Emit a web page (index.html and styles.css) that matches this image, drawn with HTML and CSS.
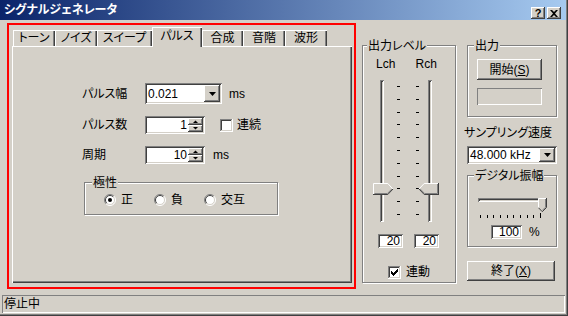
FILE: index.html
```html
<!DOCTYPE html>
<html lang="ja">
<head>
    <meta charset="UTF-8">
    <title>シグナルジェネレータ</title>
    <link rel="stylesheet" href="styles.css">
</head>
<body>
<div class="window">
    <div class="titlebar">
        <span class="title">シグナルジェネレータ</span>
        <span class="cap-btn btn">?</span>
        <span class="cap-btn btn"><svg width="8" height="7" viewBox="0 0 8 7"><path d="M0 0h2l2 2 2-2h2L5 3.5 8 7H6L4 5 2 7H0l3-3.5z"/></svg></span>
    </div>
    <div class="client">
        <div class="red-frame">
            <ul class="tabs">
                <li class="tab">トーン</li>
                <li class="tab">ノイズ</li>
                <li class="tab tab-wide">スイープ</li>
                <li class="tab active">パルス</li>
                <li class="tab tab-narrow">合成</li>
                <li class="tab">音階</li>
                <li class="tab">波形</li>
            </ul>
            <div class="panel">
                <div class="row">
                    <span class="row-label">パルス幅</span>
                    <div class="combo combo-pulse sunken">
                        <span class="combo-val">0.021</span>
                        <span class="drop-btn btn"><svg width="7" height="4" viewBox="0 0 7 4"><path d="M0 0h7L3.5 4z"/></svg></span>
                    </div>
                    <span class="unit">ms</span>
                </div>
                <div class="row row-spin">
                    <span class="row-label">パルス数</span>
                    <div class="spin sunken">
                        <span class="spin-val">1</span>
                        <span class="spin-btns">
                            <span class="spin-btn btn"><svg width="5" height="3" viewBox="0 0 5 3"><path d="M0 3h5L2.5 0.5z"/></svg></span>
                            <span class="spin-btn btn"><svg width="5" height="3" viewBox="0 0 5 3"><path d="M0 0h5L2.5 2.5z"/></svg></span>
                        </span>
                    </div>
                    <span class="check check-cont">
                        <svg width="13" height="13" viewBox="0 0 13 13"><path d="M0 0h12v1H1v11H0z" fill="#808080"/><path d="M1 1h10v1H2v10H1z" fill="#404040"/><path d="M12 0h1v13H0v-1h12z" fill="#fff"/><path d="M11 1h1v11H1v-1h10z" fill="#d4d0c8"/><path d="M2 2h9v9H2z" fill="#fff"/></svg>
                        連続
                    </span>
                </div>
                <div class="row row-spin">
                    <span class="row-label">周期</span>
                    <div class="spin sunken">
                        <span class="spin-val">10</span>
                        <span class="spin-btns">
                            <span class="spin-btn btn"><svg width="5" height="3" viewBox="0 0 5 3"><path d="M0 3h5L2.5 0.5z"/></svg></span>
                            <span class="spin-btn btn"><svg width="5" height="3" viewBox="0 0 5 3"><path d="M0 0h5L2.5 2.5z"/></svg></span>
                        </span>
                    </div>
                    <span class="unit unit-wide">ms</span>
                </div>
                <div class="group polarity">
                    <span class="legend">極性</span>
                    <div class="radios">
                        <span class="radio">
                            <svg width="12" height="12" viewBox="0 0 12 12"><circle cx="6" cy="6" r="5" fill="#fff"/><path d="M2.1 9.9A5.5 5.5 0 0 1 9.9 2.1" stroke="#808080" fill="none"/><path d="M2.8 9.2A4.5 4.5 0 0 1 9.2 2.8" stroke="#404040" fill="none"/><path d="M9.9 2.1A5.5 5.5 0 0 1 2.1 9.9" stroke="#fff" fill="none"/><path d="M9.2 2.8A4.5 4.5 0 0 1 2.8 9.2" stroke="#d4d0c8" fill="none"/><circle cx="6" cy="6" r="2"/></svg>
                            正
                        </span>
                        <span class="radio">
                            <svg width="12" height="12" viewBox="0 0 12 12"><circle cx="6" cy="6" r="5" fill="#fff"/><path d="M2.1 9.9A5.5 5.5 0 0 1 9.9 2.1" stroke="#808080" fill="none"/><path d="M2.8 9.2A4.5 4.5 0 0 1 9.2 2.8" stroke="#404040" fill="none"/><path d="M9.9 2.1A5.5 5.5 0 0 1 2.1 9.9" stroke="#fff" fill="none"/><path d="M9.2 2.8A4.5 4.5 0 0 1 2.8 9.2" stroke="#d4d0c8" fill="none"/></svg>
                            負
                        </span>
                        <span class="radio">
                            <svg width="12" height="12" viewBox="0 0 12 12"><circle cx="6" cy="6" r="5" fill="#fff"/><path d="M2.1 9.9A5.5 5.5 0 0 1 9.9 2.1" stroke="#808080" fill="none"/><path d="M2.8 9.2A4.5 4.5 0 0 1 9.2 2.8" stroke="#404040" fill="none"/><path d="M9.9 2.1A5.5 5.5 0 0 1 2.1 9.9" stroke="#fff" fill="none"/><path d="M9.2 2.8A4.5 4.5 0 0 1 2.8 9.2" stroke="#d4d0c8" fill="none"/></svg>
                            交互
                        </span>
                    </div>
                </div>
            </div>
        </div>

        <div class="group level">
            <span class="legend">出力レベル</span>
            <div class="ch-row">
                <span class="ch">Lch</span>
                <span class="ch">Rch</span>
            </div>
            <div class="sliders">
                <div class="vslider vslider-l">
                    <span class="vtrack"></span>
                    <svg class="thumb" width="21" height="12" viewBox="0 0 21 12"><path d="M0 0h15l5.5 6-5.5 6H0z" fill="#d4d0c8"/><path d="M0.5 11V0.5h14.3l5 5.5" stroke="#fff" fill="none"/><path d="M20 6l-5.2 5.5H0" stroke="#404040" fill="none"/><path d="M18.8 6l-4.4 4.5H1.5" stroke="#808080" fill="none"/></svg>
                </div>
                <div class="ticks"><i></i><i></i><i></i><i></i><i></i><i></i><i></i><i></i><i></i><i></i><i></i></div>
                <div class="ticks"><i></i><i></i><i></i><i></i><i></i><i></i><i></i><i></i><i></i><i></i><i></i></div>
                <div class="vslider vslider-r">
                    <span class="vtrack"></span>
                    <svg class="thumb" width="21" height="12" viewBox="0 0 21 12"><path d="M21 0H6L0.5 6 6 12h15z" fill="#d4d0c8"/><path d="M1 6l5.2-5.5H20" stroke="#fff" fill="none"/><path d="M1 6l5.2 5.5H21M20.5 0v12" stroke="#404040" fill="none"/><path d="M2.2 6l4.4 4.5H19.5V1" stroke="#808080" fill="none"/></svg>
                </div>
            </div>
            <div class="level-edits">
                <span class="edit sunken">20</span>
                <span class="edit sunken">20</span>
            </div>
            <span class="check check-link">
                <svg width="13" height="13" viewBox="0 0 13 13"><path d="M0 0h12v1H1v11H0z" fill="#808080"/><path d="M1 1h10v1H2v10H1z" fill="#404040"/><path d="M12 0h1v13H0v-1h12z" fill="#fff"/><path d="M11 1h1v11H1v-1h10z" fill="#d4d0c8"/><path d="M2 2h9v9H2z" fill="#fff"/><path d="M3 5h1v3H3zM4 6h1v3H4zM5 7h1v3H5zM6 6h1v3H6zM7 5h1v3H7zM8 4h1v3H8zM9 3h1v3H9z"/></svg>
                連動
            </span>
        </div>

        <div class="side">
            <div class="group output">
                <span class="legend">出力</span>
                <span class="btn push start">開始(<u>S</u>)</span>
                <span class="static-box"></span>
            </div>
            <span class="side-label">サンプリング速度</span>
            <div class="combo combo-rate sunken">
                <span class="combo-val">48.000 kHz</span>
                <span class="drop-btn btn"><svg width="7" height="4" viewBox="0 0 7 4"><path d="M0 0h7L3.5 4z"/></svg></span>
            </div>
            <div class="group digital">
                <span class="legend">デジタル振幅</span>
                <div class="hslider">
                    <span class="htrack"></span>
                    <svg class="hthumb" width="9" height="14" viewBox="0 0 9 14"><path d="M0 0h9v9.5L4.5 14 0 9.5z" fill="#d4d0c8"/><path d="M0.5 9.5V0.5h7.5" stroke="#fff" fill="none"/><path d="M8.5 0v9.5l-4.2 4.2L0.5 9.8" stroke="#404040" fill="none"/><path d="M7.5 1v8.2l-3.2 3.2" stroke="#808080" fill="none"/></svg>
                </div>
                <div class="hticks"><i></i><i></i><i></i><i></i><i></i><i></i><i></i><i></i><i></i><i class="tick-end"></i></div>
                <div class="amp-row">
                    <span class="edit edit-amp sunken">100</span>
                    <span class="unit-pct">%</span>
                </div>
            </div>
            <span class="btn push quit">終了(<u>X</u>)</span>
        </div>
    </div>
    <div class="statusbar">停止中</div>
</div>
</body>
</html>
```

FILE: styles.css
```css
body,div,ul,li,span{margin:0;padding:0;}
ul{list-style-type:none;}
body{background:#d4d0c8;color:#000;font:12px/14px "Liberation Sans","Noto Sans CJK JP",sans-serif;font-feature-settings:"palt";}
svg{display:block;}
i{display:block;}
u{text-decoration:underline;}

/* 3D frames */
.btn{background:#d4d0c8;box-shadow:inset -1px -1px #404040,inset 1px 1px #fff,inset -2px -2px #808080;}
.sunken{background:#fff;box-shadow:inset 1px 1px #808080,inset -1px -1px #fff,inset 2px 2px #404040,inset -2px -2px #d4d0c8;}
.group{position:relative;box-sizing:border-box;border:1px solid #808080;box-shadow:inset 1px 1px #fff,1px 1px #fff;}
.legend{position:absolute;top:-6px;left:6px;padding:0 1px;background:#d4d0c8;line-height:12px;white-space:nowrap;}

.window{width:568px;height:316px;display:flex;flex-direction:column;box-shadow:inset -1px -1px #404040,inset -2px -2px #808080;}

/* title */
.titlebar{height:20px;margin-right:2px;padding:0 5px 0 4px;display:flex;align-items:center;background:linear-gradient(to right,#0a246a,#a6caf0);}
.title{flex:1;color:#fff;font-weight:bold;}
.cap-btn{width:14px;height:12px;margin:6px 0 0 2px;display:flex;align-items:center;justify-content:center;font:bold 11px/12px "Liberation Sans",sans-serif;}

.client{height:275px;box-sizing:border-box;padding:3px 0 0 7px;display:flex;align-items:flex-start;}

/* tab control */
.red-frame{width:349px;height:266px;box-sizing:border-box;border:2px solid #f00;padding:2px 2px 4px 3px;display:flex;flex-direction:column;}
.tabs{height:19px;margin-left:1px;display:flex;align-items:flex-end;position:relative;z-index:1;}
.tab{width:42px;height:16px;box-sizing:border-box;text-align:center;line-height:16px;box-shadow:inset 1px 1px #fff,inset -1px 0 #404040,inset -2px 0 #808080;}
.tab-wide{width:55px;}
.tab-narrow{width:41px;}
.tab.active{width:50px;height:20px;margin-bottom:-1px;line-height:18px;background:#d4d0c8;}
.panel{flex:1;padding:37px 0 0 70px;box-shadow:inset 1px 1px #fff,inset -1px -1px #404040,inset -2px -2px #808080;}

.row{height:21px;display:flex;align-items:center;}
.row-spin{height:18px;margin-top:12px;}
.row-label{width:63px;}
.unit{margin-left:7px;}
.unit-wide{margin-left:8px;}

.combo{display:flex;align-items:center;box-sizing:border-box;padding:2px;}
.combo-pulse{width:77px;height:21px;}
.combo-val{flex:1;padding-left:1px;}
.drop-btn{width:16px;align-self:stretch;display:flex;align-items:center;justify-content:center;}

.spin{width:60px;height:18px;box-sizing:border-box;padding:2px;display:flex;}
.spin-val{flex:1;text-align:right;padding-right:1px;line-height:14px;}
.spin-btns{width:15px;display:flex;flex-direction:column;}
.spin-btn{flex:1;display:flex;align-items:center;justify-content:center;}

.check{display:flex;align-items:center;gap:4px;}
.check-cont{margin-left:15px;}

.polarity{width:194px;height:33px;margin:18px 0 0 2px;padding:11px 0 0 19px;}
.polarity .legend{left:7px;}
.radios{display:flex;gap:21px;}
.radio{display:flex;align-items:center;gap:5px;height:12px;}

/* output level */
.level{width:94px;height:238px;margin:22px 0 0 6px;padding-top:12px;}
.level .legend{left:4px;}
.ch-row{display:flex;margin-left:13px;line-height:12px;}
.ch{width:43px;}
.sliders{height:142px;margin:10px 0 0 10px;display:flex;}
.vslider{width:21px;position:relative;}
.vtrack{display:block;width:4px;height:142px;box-shadow:inset 1px 1px #808080,inset -1px -1px #fff,inset 2px 2px #404040;}
.vslider-l .vtrack{margin-left:7px;}
.vslider-r .vtrack{margin-left:9px;}
.thumb{position:absolute;top:103px;left:0;}
.vslider-r .thumb{left:-1px;}
.ticks{width:3px;margin-left:3px;padding:6px 0 7px;box-sizing:border-box;display:flex;flex-direction:column;justify-content:space-between;}
.ticks + .ticks{margin-left:16px;margin-right:0;}
.ticks i{height:1px;background:#000;}
.level-edits{display:flex;gap:11px;margin:12px 0 0 15px;}
.edit{width:25px;height:14px;box-sizing:border-box;padding-right:3px;text-align:right;line-height:14px;}
.check-link{margin:17px 0 0 25px;gap:5px;}

/* right column */
.side{width:90px;margin:22px 0 0 11px;display:flex;flex-direction:column;align-items:flex-start;}
.output{width:90px;height:72px;padding:13px 0 0 9px;}
.push{display:flex;align-items:center;justify-content:center;}
.start{width:65px;height:21px;}
.static-box{display:block;width:65px;height:17px;margin-top:8px;box-shadow:inset 1px 1px #808080,inset -1px -1px #fff;}
.side-label{margin:9px 0 0 -3px;white-space:nowrap;}
.combo-rate{width:90px;height:18px;margin-top:6px;}
.digital{width:90px;height:72px;margin-top:11px;padding:16px 0 0 10px;}
.hslider{width:68px;height:14px;position:relative;}
.htrack{display:block;width:63px;height:4px;margin-top:6px;box-shadow:inset 1px 1px #808080,inset -1px -1px #fff,inset 2px 2px #404040;}
.hthumb{position:absolute;top:0;left:60px;}
.hticks{width:61px;height:5px;margin:1px 0 0 2px;display:flex;align-items:flex-end;justify-content:space-between;}
.hticks i{width:1px;height:3px;background:#000;}
.hticks .tick-end{height:5px;}
.amp-row{display:flex;align-items:center;gap:7px;margin:7px 0 0 13px;}
.edit-amp{width:31px;}
.quit{width:88px;height:20px;margin-top:14px;}

.statusbar{height:18px;margin:0 3px 0 2px;padding-left:2px;line-height:18px;box-shadow:inset 1px 1px #808080,inset -1px -1px #fff;}
```
